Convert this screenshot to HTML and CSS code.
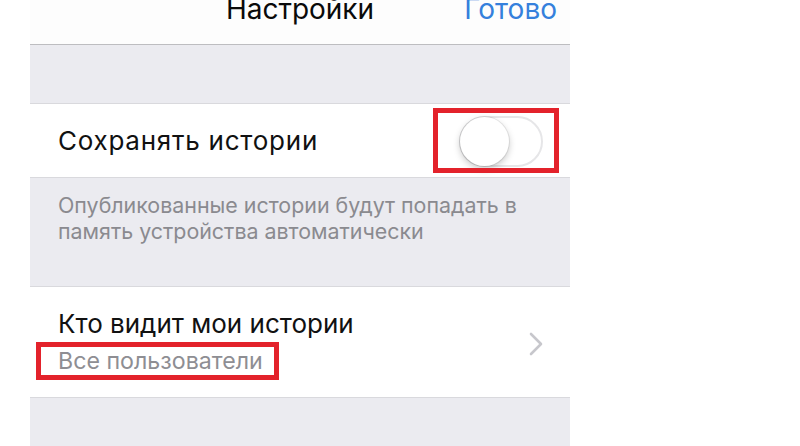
FILE: index.html
```html
<!DOCTYPE html>
<html lang="ru">
<head>
<meta charset="utf-8">
<link rel="stylesheet" href="styles.css">
</head>
<body>
<div class="panel">
  <header class="nav">
    <div class="nav-inner">
      <span class="nav-title">Настройки</span>
      <span class="nav-done">Готово</span>
    </div>
  </header>
  <div class="gap gap-top"></div>
  <div class="row row-toggle">
    <span class="row-title title-save">Сохранять истории</span>
    <span class="toggle-wrap">
      <span class="toggle"><span class="knob"></span></span>
      <span class="mark mark-toggle"></span>
    </span>
  </div>
  <div class="footer-note">Опубликованные истории будут попадать в<br>память устройства автоматически</div>
  <div class="row row-nav">
    <div class="row-text">
      <div class="row-title">Кто видит мои истории</div>
      <div class="row-sub"><span class="sub-wrap">Все пользователи<span class="mark mark-sub"></span></span></div>
    </div>
    <svg class="chevron" width="14" height="24" viewBox="0 0 14 24"><path d="M2 2 L12 12 L2 22" fill="none" stroke="#c7c7cc" stroke-width="2.6" stroke-linecap="round" stroke-linejoin="round"/></svg>
  </div>
  <div class="gap gap-bottom"></div>
</div>
</body>
</html>
```
FILE: styles.css
```css
html, body {
  margin: 0;
  padding: 0;
  background: #ffffff;
}
body {
  font-family: Inter, "Noto Sans", "Liberation Sans", sans-serif;
  width: 800px;
  height: 446px;
  overflow: hidden;
}
.panel {
  width: 540px;
  margin-left: 30px;
}
.nav {
  height: 44px;
  border-bottom: 1px solid #bdbdc0;
  background: #fdfdfd;
  overflow: hidden;
}
.nav-inner {
  position: relative;
  display: flex;
  justify-content: center;
  margin-top: -9px;
  height: 36px;
  line-height: 36px;
}
.nav-title {
  font-size: 28px;
  color: #0a0a0a;
}
.nav-done {
  position: absolute;
  right: 13px;
  top: 0;
  font-size: 28px;
  color: #3580dc;
}
.gap {
  background: #ebebf0;
}
.gap-top {
  height: 58px;
  border-bottom: 1px solid #d9d9dd;
}
.gap-bottom {
  height: 49px;
  border-top: 1px solid #d9d9dd;
}
.row {
  background: #ffffff;
  display: flex;
  align-items: center;
  justify-content: space-between;
  padding: 0 27px 0 28px;
}
.row-toggle {
  height: 73px;
}
.row-title {
  font-size: 26px;
  color: #111111;
}
.title-save {
  letter-spacing: 0.75px;
}
.toggle-wrap {
  position: relative;
  display: inline-block;
  width: 84px;
  height: 51px;
  margin-top: 1px;
}
.toggle {
  display: block;
  box-sizing: border-box;
  width: 84px;
  height: 51px;
  border: 2px solid #e6e6e8;
  border-radius: 26px;
  background: #ffffff;
  position: relative;
}
.knob {
  position: absolute;
  left: -1px;
  top: -1px;
  width: 49px;
  height: 49px;
  border-radius: 50%;
  background: #ffffff;
  box-shadow: 0 3px 7px rgba(0,0,0,0.22), 0 0 0 1px rgba(0,0,0,0.08);
}
.mark {
  position: absolute;
  border: 5px solid #e3222b;
  box-sizing: border-box;
}
.mark-toggle {
  left: -26px;
  right: -16px;
  top: -8px;
  bottom: -6px;
}
.footer-note {
  background: #ebebf0;
  border-top: 1px solid #d9d9dd;
  border-bottom: 1px solid #d9d9dd;
  height: 110px;
  box-sizing: border-box;
  padding: 14px 28px 0;
  font-size: 21.4px;
  line-height: 26px;
  color: #8a8a8f;
}
.row-nav {
  height: 110px;
}
.row-text {
  display: flex;
  flex-direction: column;
  gap: 8px;
  margin-top: -2px;
}
.row-sub {
  font-size: 23.2px;
  color: #8e8e93;
}
.sub-wrap {
  position: relative;
  display: inline-block;
}
.mark-sub {
  left: -22px;
  right: -16px;
  top: -5px;
  bottom: -5px;
}
.chevron {
  display: block;
  margin-top: 4px;
}
```
